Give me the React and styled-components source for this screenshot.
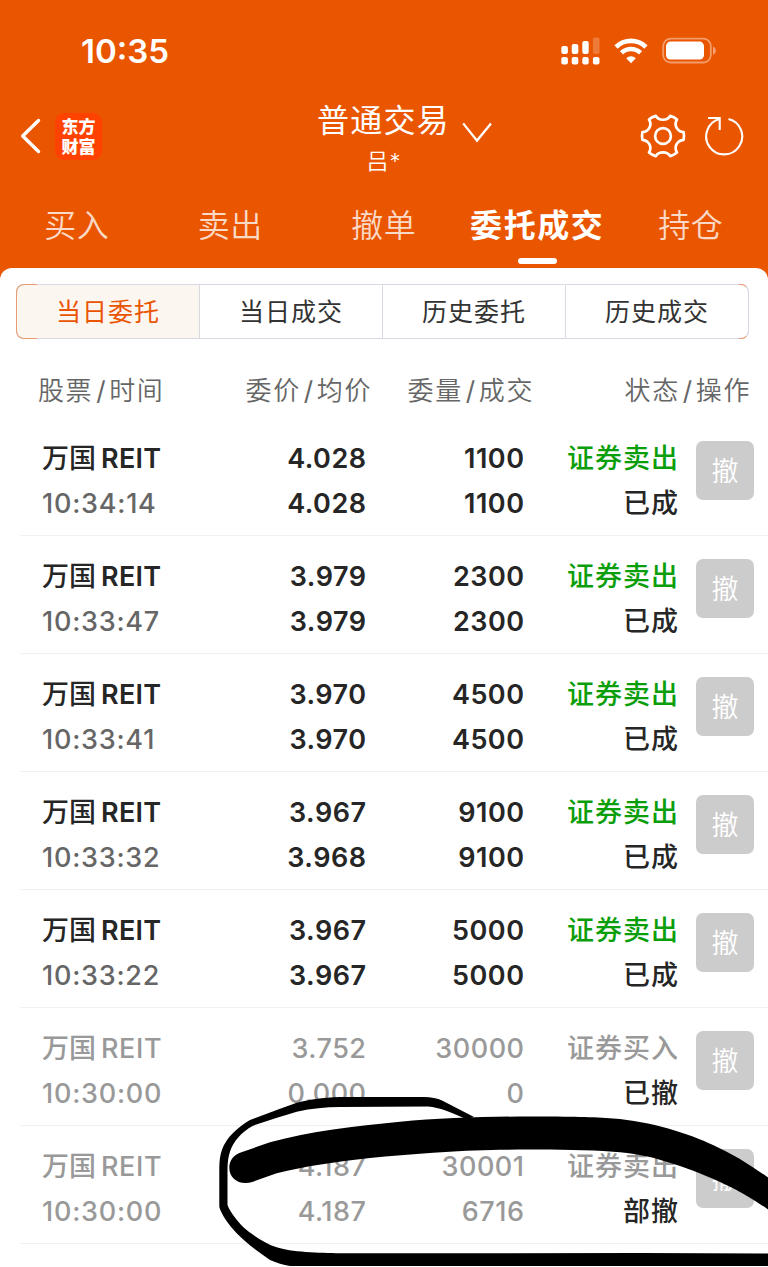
import React from "react";
import styled, { createGlobalStyle, css } from "styled-components";

const tabs = ["买入", "卖出", "撤单", "委托成交", "持仓"];
const segments = ["当日委托", "当日成交", "历史委托", "历史成交"];

const orders = [
  { time: "10:34:14", price: "4.028", avg: "4.028", qty: "1100", filled: "1100", side: "证券卖出", status: "已成" },
  { time: "10:33:47", price: "3.979", avg: "3.979", qty: "2300", filled: "2300", side: "证券卖出", status: "已成" },
  { time: "10:33:41", price: "3.970", avg: "3.970", qty: "4500", filled: "4500", side: "证券卖出", status: "已成" },
  { time: "10:33:32", price: "3.967", avg: "3.968", qty: "9100", filled: "9100", side: "证券卖出", status: "已成" },
  { time: "10:33:22", price: "3.967", avg: "3.967", qty: "5000", filled: "5000", side: "证券卖出", status: "已成" },
  { time: "10:30:00", price: "3.752", avg: "0.000", qty: "30000", filled: "0", side: "证券买入", status: "已撤", muted: true },
  { time: "10:30:00", price: "4.187", avg: "4.187", qty: "30001", filled: "6716", side: "证券卖出", status: "部撤", muted: true },
];

const SignalIcon = () => (
  <svg width="39" height="28" viewBox="0 0 39 28" fill="#fff">
    <rect x="0.3" y="9" width="6.6" height="8" rx="2" />
    <rect x="10.7" y="7" width="6.6" height="10" rx="2" />
    <rect x="21.3" y="4" width="6.4" height="13" rx="2" />
    <rect x="31.9" y="0.5" width="6.6" height="16.5" rx="2" opacity="0.22" />
    <rect x="0.3" y="20" width="6.6" height="7.4" rx="2" />
    <rect x="10.7" y="20" width="6.6" height="7.4" rx="2" />
    <rect x="21.3" y="20" width="6.4" height="7.4" rx="2" />
    <rect x="31.9" y="20" width="6.6" height="7.4" rx="2" />
  </svg>
);

const WifiIcon = () => (
  <svg width="34" height="26" viewBox="0 0 34 26" fill="none" stroke="#fff" strokeWidth="4.6">
    <path d="M2 9 A21.5 21.5 0 0 1 32 9" />
    <path d="M7.5 14.8 A13.6 13.6 0 0 1 26.5 14.8" />
    <path d="M17 25.2 L12.2 20.3 A6.9 6.9 0 0 1 21.8 20.3 Z" fill="#fff" stroke="none" />
  </svg>
);

const BatteryIcon = () => (
  <svg width="55" height="28" viewBox="0 0 55 28">
    <rect x="1.2" y="1.7" width="47.6" height="23.8" rx="7.5" fill="none" stroke="#fff" strokeWidth="1.8" opacity="0.42" />
    <rect x="4" y="4.6" width="38" height="18" rx="4.5" fill="#fff" />
    <path d="M51 9.5 C54.8 11 54.8 16.4 51 17.8 Z" fill="#fff" opacity="0.45" />
  </svg>
);

const BackIcon = () => (
  <svg width="24" height="38" viewBox="0 0 24 38" fill="none" stroke="#fff" strokeWidth="3.4" strokeLinecap="round" strokeLinejoin="round">
    <path d="M19.5 3.5 L3.7 19 L19.5 34.5" />
  </svg>
);

const ArrowDown = () => (
  <svg width="32" height="22" viewBox="0 0 32 22" fill="none" stroke="#fff" strokeWidth="2.3">
    <path d="M1.2 1.4 L15 18.6 L29 1.4" />
  </svg>
);

const GearIcon = () => (
  <svg width="46" height="46" viewBox="0 0 46 46" fill="none" stroke="#fff" strokeWidth="2.7" strokeLinejoin="round">
    <path d="M15.8 2.9 C18.5 8 27.5 8 30.2 2.9 Q34 4 37 6.5 C33.5 12 37 18.5 43.6 19.2 Q44.4 23 43.6 26.8 C37 27.5 33.5 34 37 39.5 Q34 42 30.2 43.1 C27.5 38 18.5 38 15.8 43.1 Q12 42 9 39.5 C12.5 34 9 27.5 2.4 26.8 Q1.6 23 2.4 19.2 C9 18.5 12.5 12 9 6.5 Q12 4 15.8 2.9 Z" />
    <circle cx="23" cy="23" r="7.9" />
  </svg>
);

const RefreshIcon = () => (
  <svg width="42" height="42" viewBox="0 0 42 42" fill="none" stroke="#fff" strokeWidth="2.1">
    <path d="M24.5 3.9 A18 18 0 1 1 15.5 4" />
    <path d="M4 3 H15.7 V15" />
  </svg>
);

// freehand marker strokes over the last order
const MarkerStrokes = () => (
  <Marker width="768" height="1267" viewBox="0 0 768 1267">
    <path d="M229.3 1167.7 C229.3 1160 234 1155 240 1152.7 L270 1142.3 C310 1131 355 1126 400 1121.7 C440 1118 490 1116.5 530 1116.5 C570 1116.5 595 1117 613 1118.5 C650 1121 690 1134 713 1145 C733 1154 752 1166 770 1179 L770 1211 C755 1200 738 1190 720 1182 C705 1175 685 1167 667 1162 C650 1156 632 1153 613 1151.7 C580 1149.5 540 1149.5 500 1149.7 C455 1150.5 410 1154 370 1158 C335 1162 305 1166 276.7 1173.3 L253 1181.7 C240 1186 229.3 1179 229.3 1167.7 Z" />
    <path d="M474 1117 L443 1101 C437 1098 431 1097 424 1097 L340 1097 C322 1097.5 308 1100 296.7 1102.7 L276.7 1110 L250 1120 C243 1124 238 1128 233 1133 C222 1144 219.5 1154 219.3 1168 L219.3 1206.7 C221 1214 229 1225 236.7 1233.3 C246 1243 258 1252 270 1260 C277 1263 283 1265 290 1266 L768 1266 L768 1253.5 L640 1253 L340 1253.3 C320 1253 290 1252 276.7 1247.3 C266 1244 254 1236 246.7 1230 C240 1225 230 1212 227.5 1205 L227.5 1168 C228 1154 231 1146 238 1137.7 C242 1133 247 1129 253 1125.7 L277 1117.7 L296.7 1111.7 C312 1108.5 325 1107 340 1107 L428 1106.5 C440 1107.5 450 1112 466 1119 Z" />
  </Marker>
);

const App = () => {
  return (
    <>
      <GlobalStyle />
      <Screen>
        <Header>
          <StatusBar>
            <Clock>10:35</Clock>
            <StatusIcons>
              <SignalIcon />
              <WifiIcon />
              <BatteryIcon />
            </StatusIcons>
          </StatusBar>
          <NavBar>
            <NavLeft>
              <BackIcon />
              <Logo>
                东方
                <br />
                财富
              </Logo>
            </NavLeft>
            <Account>
              <TitleBlock>
                <Title>普通交易</Title>
                <UserName>吕*</UserName>
              </TitleBlock>
              <ArrowDown />
            </Account>
            <NavRight>
              <GearIcon />
              <RefreshIcon />
            </NavRight>
          </NavBar>
          <Tabs>
            {tabs.map((tab) => (
              <Tab key={tab} $active={tab === "委托成交"}>
                {tab}
              </Tab>
            ))}
          </Tabs>
        </Header>
        <Panel>
          <Segments>
            {segments.map((segment, i) => (
              <Segment key={segment} $active={i === 0}>
                {segment}
              </Segment>
            ))}
          </Segments>
          <TableHead>
            <HeadCell $left>
              股票<Slash>/</Slash>时间
            </HeadCell>
            <HeadCell>
              委价<Slash>/</Slash>均价
            </HeadCell>
            <HeadCell>
              委量<Slash>/</Slash>成交
            </HeadCell>
            <HeadCell>
              状态<Slash>/</Slash>操作
            </HeadCell>
          </TableHead>
          {orders.map((order, i) => (
            <OrderRow key={i} $muted={order.muted}>
              <div>
                <Name>
                  <span>万国</span>
                  <Ticker $muted={order.muted}>REIT</Ticker>
                </Name>
                <Time $muted={order.muted}>{order.time}</Time>
              </div>
              <NumberCell>
                <div>{order.price}</div>
                <div>{order.avg}</div>
              </NumberCell>
              <NumberCell>
                <div>{order.qty}</div>
                <div>{order.filled}</div>
              </NumberCell>
              <StatusCell>
                <Side $muted={order.muted}>{order.side}</Side>
                <Status>{order.status}</Status>
              </StatusCell>
              <CancelButton>撤</CancelButton>
            </OrderRow>
          ))}
        </Panel>
        <MarkerStrokes />
      </Screen>
    </>
  );
};

export default App;

const GlobalStyle = createGlobalStyle`
  body {
    margin: 0;
    background: #fff;
  }
  * {
    box-sizing: border-box;
  }
  svg {
    display: block;
    flex: none;
  }
`;

const Screen = styled.div`
  position: relative;
  width: 768px;
  height: 1267px;
  overflow: hidden;
  background: #ea5500;
  font-family: Inter, "Noto Sans CJK SC", sans-serif;
  white-space: nowrap;
`;

const Header = styled.header`
  height: 268px;
  color: #fff;
`;

const StatusBar = styled.div`
  display: flex;
  justify-content: space-between;
  align-items: center;
  height: 102px;
  padding: 0 51px 0 81px;
`;

const Clock = styled.div`
  padding-top: 1px;
  font-size: 33px;
  font-weight: 600;
  line-height: 41px;
`;

const StatusIcons = styled.div`
  display: flex;
  align-items: center;
  gap: 14px;
`;

const NavBar = styled.div`
  display: grid;
  grid-template-columns: 317px 1fr 128.5px;
  height: 78px;
`;

const NavLeft = styled.div`
  display: flex;
  align-items: center;
  gap: 12px;
  height: 68px;
  padding-left: 19px;
`;

const Logo = styled.div`
  width: 47px;
  height: 47px;
  padding-top: 3px;
  border-radius: 9px;
  background: #ff4200;
  font-family: "Noto Sans CJK SC", sans-serif;
  font-size: 17px;
  font-weight: 900;
  line-height: 20px;
  text-align: center;
`;

const Account = styled.div`
  display: flex;
  gap: 12px;

  svg {
    margin-top: 20px;
  }
`;

const TitleBlock = styled.div`
  display: flex;
  flex-direction: column;
  align-items: center;
`;

const Title = styled.div`
  margin-top: 1px;
  font-size: 32px;
  font-weight: 400;
  letter-spacing: 1.2px;
  line-height: 36px;
`;

const UserName = styled.div`
  margin-top: 10px;
  padding-left: 1px;
  font-size: 22px;
  font-weight: 350;
  letter-spacing: 1px;
  line-height: 24px;
`;

const NavRight = styled.div`
  display: flex;
  align-items: center;
  gap: 18px;
  height: 68px;
`;

const Tabs = styled.nav`
  display: grid;
  grid-template-columns: repeat(5, 153.5px);
  height: 88px;
`;

const Tab = styled.div`
  display: flex;
  flex-direction: column;
  align-items: center;
  padding-top: 26px;
  color: rgba(255, 255, 255, 0.78);
  font-size: 32px;
  font-weight: 350;
  letter-spacing: 0.6px;
  line-height: 40px;

  ${(props) =>
    props.$active &&
    css`
      color: #fff;
      font-weight: 700;
      letter-spacing: 1.6px;

      &::after {
        content: "";
        width: 39px;
        height: 6px;
        margin-top: 12px;
        border-radius: 3px;
        background: #fff;
      }
    `}
`;

const Panel = styled.main`
  height: 999px;
  padding-top: 16px;
  border-radius: 12px 12px 0 0;
  background: #fff;
`;

const Segments = styled.div`
  display: grid;
  grid-template-columns: 183px 183px 183px 184px;
  grid-template-rows: 55px;
  height: 55px;
  margin-left: 16px;
`;

const Segment = styled.div`
  position: relative;
  height: 55px;
  border: 1px solid #d9d9e3;
  border-right-width: 0;
  background: ${(props) => (props.$active ? "#fcf6f0" : "#fff")};
  color: ${(props) => (props.$active ? "#ea5504" : "#333")};
  font-size: 25px;
  letter-spacing: 1px;
  line-height: 55px;
  text-align: center;

  &:first-child {
    border-radius: 8px 0 0 8px;
  }

  &:last-child {
    border-right-width: 1px;
    border-radius: 0 8px 8px 0;
  }

  /* tinted rounded ends */
  &:first-child::before,
  &:last-child::after {
    content: "";
    position: absolute;
    top: -1px;
    bottom: -1px;
    border: 1px solid #e99a72;
  }

  &:first-child::before {
    left: -1px;
    width: 20px;
    border-right: 0;
    border-radius: 8px 0 0 8px;
  }

  &:last-child::after {
    right: -1px;
    width: 9px;
    border-left: 0;
    border-right-color: #d9d9e3;
    border-radius: 0 8px 8px 0;
  }
`;

const TableHead = styled.div`
  display: grid;
  grid-template-columns: 171px 163px 162px 217px;
  height: 79px;
  padding: 32px 0 0 38px;
`;

const HeadCell = styled.div`
  color: #666;
  font-size: 26px;
  font-weight: 350;
  letter-spacing: 1.6px;
  line-height: 40px;
  text-align: ${(props) => (props.$left ? "left" : "right")};
`;

const Slash = styled.span`
  margin: 0 2px 0 3px;
  font-weight: 400;
`;

const OrderRow = styled.div`
  display: grid;
  grid-template-columns: 162px 162.5px 158px 154.5px 58px;
  height: 118px;
  margin-left: 20px;
  padding: 18px 0 0 22px;
  border-bottom: 1px solid #f1f1f1;
  color: ${(props) => (props.$muted ? "#999" : "#262626")};
  font-size: 27px;
  font-weight: ${(props) => (props.$muted ? 500 : 600)};
  line-height: 45px;
`;

const Name = styled.div`
  display: flex;
  gap: 5px;
  font-weight: 500;
`;

const Ticker = styled.span`
  font-weight: ${(props) => (props.$muted ? 500 : 600)};
  letter-spacing: ${(props) => (props.$muted ? 0.6 : 0.3)}px;
`;

const Time = styled.div`
  color: ${(props) => (props.$muted ? "#999" : "#666")};
  font-weight: 500;
  letter-spacing: 0.75px;
`;

const NumberCell = styled.div`
  letter-spacing: 0.5px;
  text-align: right;
`;

const StatusCell = styled.div`
  font-weight: 500;
  letter-spacing: 1px;
  text-align: right;
`;

const Side = styled.div`
  color: ${(props) => (props.$muted ? "#999" : "#0a9e0a")};
`;

const Status = styled.div`
  color: #262626;
`;

const CancelButton = styled.button`
  width: 58px;
  height: 59px;
  margin: 5px 0 0 17px;
  padding: 0 0 2px;
  border: 0;
  border-radius: 7px;
  background: #ccc;
  color: #fff;
  font-family: "Noto Sans CJK SC", sans-serif;
  font-size: 27px;
  font-weight: 350;
`;

const Marker = styled.svg`
  position: absolute;
  top: 0;
  left: 0;
`;
